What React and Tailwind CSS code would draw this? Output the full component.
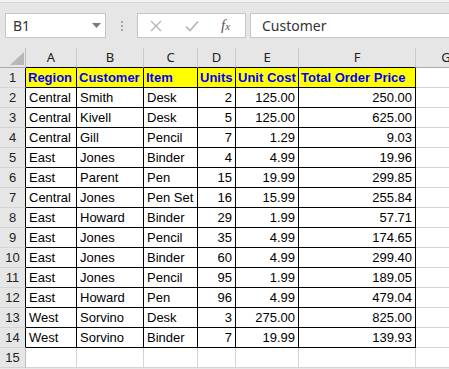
import React from "react";

const cols = [
  { key: "A", w: "w-[51px]", align: "left" },
  { key: "B", w: "w-[67px]", align: "left" },
  { key: "C", w: "w-[54px]", align: "left" },
  { key: "D", w: "w-[38px]", align: "right" },
  { key: "E", w: "w-[63px]", align: "right" },
  { key: "F", w: "w-[117px]", align: "right" },
];

const head = ["Region", "Customer", "Item", "Units", "Unit Cost", "Total Order Price"];

const rows = [
  ["Central", "Smith", "Desk", "2", "125.00", "250.00"],
  ["Central", "Kivell", "Desk", "5", "125.00", "625.00"],
  ["Central", "Gill", "Pencil", "7", "1.29", "9.03"],
  ["East", "Jones", "Binder", "4", "4.99", "19.96"],
  ["East", "Parent", "Pen", "15", "19.99", "299.85"],
  ["Central", "Jones", "Pen Set", "16", "15.99", "255.84"],
  ["East", "Howard", "Binder", "29", "1.99", "57.71"],
  ["East", "Jones", "Pencil", "35", "4.99", "174.65"],
  ["East", "Jones", "Binder", "60", "4.99", "299.40"],
  ["East", "Jones", "Pencil", "95", "1.99", "189.05"],
  ["East", "Howard", "Pen", "96", "4.99", "479.04"],
  ["West", "Sorvino", "Desk", "3", "275.00", "825.00"],
  ["West", "Sorvino", "Binder", "7", "19.99", "139.93"],
];

function RowHead({ n, dark }) {
  return (
    <div
      className={
        "w-[26px] shrink-0 h-full flex items-center justify-center border-r border-b border-b-[#d4d4d4] bg-[#e6e6e6] text-[13px] text-[#222] " +
        (dark ? "border-r-black" : "border-r-[#bdbdbd]")
      }
    >
      {n}
    </div>
  );
}

function Cell({ col, children, bold }) {
  return (
    <div
      className={
        col.w +
        " shrink-0 h-full flex items-center border-r border-b border-black whitespace-nowrap overflow-hidden " +
        (bold
          ? "pl-[2px] bg-[#ffff00] text-[#0000ff] font-bold"
          : "px-[3px] bg-white text-black " + (col.align === "right" ? "justify-end" : ""))
      }
    >
      {children}
    </div>
  );
}

export default function App() {
  return (
    <div className="w-[449px] h-[369px] overflow-hidden bg-[#e6e6e6] font-['Liberation_Sans',Arial,sans-serif]">
      {/* top strip */}
      <div className="h-[2px] bg-[#f3f3f3]" />
      <div className="h-[1px] bg-[#d5d5d5]" />

      {/* formula bar */}
      <div className="h-[45px] pt-[10px] flex items-start font-['Noto_Sans',sans-serif]">
        <div className="ml-[5px] w-[101px] h-[25px] bg-white border border-[#c6c6c6] flex items-center justify-between pl-[7px] pr-[4px]">
          <span className="text-[14px] text-[#333]">B1</span>
          <svg width="9" height="5" viewBox="0 0 9 5">
            <path d="M0 0 L9 0 L4.5 5 Z" fill="#7a7a7a" />
          </svg>
        </div>
        <div className="ml-[15px] mt-[8px] flex flex-col gap-[2px]">
          <div className="w-[2px] h-[2px] bg-[#a6a6a6]" />
          <div className="w-[2px] h-[2px] bg-[#a6a6a6]" />
          <div className="w-[2px] h-[2px] bg-[#a6a6a6]" />
        </div>
        <div className="ml-[14px] w-[109px] h-[25px] bg-white border border-[#c6c6c6] flex items-center">
          <svg className="ml-[12px]" width="12" height="12" viewBox="0 0 12 12">
            <path d="M1 1 L11 11 M11 1 L1 11" stroke="#b3b3b3" strokeWidth="1.3" />
          </svg>
          <svg className="ml-[23px]" width="14" height="12" viewBox="0 0 14 12">
            <path d="M1 6.5 L5 10.5 L13 1.5" stroke="#b3b3b3" strokeWidth="1.6" fill="none" />
          </svg>
          <span className="ml-[22px] italic font-['Liberation_Serif',serif] text-[15px] text-[#555] leading-none">
            f<span className="text-[11px]">x</span>
          </span>
        </div>
        <div className="ml-[4px] flex-1 h-[25px] bg-white border border-[#c6c6c6] border-r-0 flex items-center pl-[11px]">
          <span className="text-[14px] text-[#333]">Customer</span>
        </div>
      </div>

      {/* column headers */}
      <div className="h-[20px] flex font-['Noto_Sans',sans-serif] text-[13px] text-[#222]">
        <div className="w-[26px] shrink-0 h-full border-r border-r-[#bdbdbd] border-b border-b-[#ababab] flex items-end justify-end pr-[1px] pb-[2px]">
          <svg width="14" height="13" viewBox="0 0 14 13">
            <path d="M14 0 L14 13 L0 13 Z" fill="#b8b8b8" />
          </svg>
        </div>
        {cols.map((c) => (
          <div
            key={c.key}
            className={c.w + " shrink-0 h-full flex items-center justify-center border-r border-r-[#c9c9c9] border-b border-b-black"}
          >
            {c.key}
          </div>
        ))}
        <div className="w-[60px] shrink-0 h-full flex items-center justify-center border-b border-b-[#ababab]">
          G
        </div>
      </div>

      {/* grid */}
      <div className="text-[13px]">
        <div className="h-[20px] flex">
          <RowHead n={1} dark />
          {cols.map((c, i) => (
            <Cell key={c.key} col={c} bold>
              {head[i]}
            </Cell>
          ))}
          <div className="w-[64px] shrink-0 h-full bg-white border-b border-[#d4d4d4]" />
        </div>
        {rows.map((r, ri) => (
          <div key={ri} className="h-[20px] flex">
            <RowHead n={ri + 2} dark />
            {cols.map((c, i) => (
              <Cell key={c.key} col={c}>
                {r[i]}
              </Cell>
            ))}
            <div className="w-[64px] shrink-0 h-full bg-white border-b border-[#d4d4d4]" />
          </div>
        ))}
        <div className="h-[20px] flex">
          <RowHead n={15} />
          {cols.map((c) => (
            <div key={c.key} className={c.w + " shrink-0 h-full bg-white border-r border-b border-[#d4d4d4]"} />
          ))}
          <div className="w-[64px] shrink-0 h-full bg-white border-b border-[#d4d4d4]" />
        </div>
      </div>
    </div>
  );
}
